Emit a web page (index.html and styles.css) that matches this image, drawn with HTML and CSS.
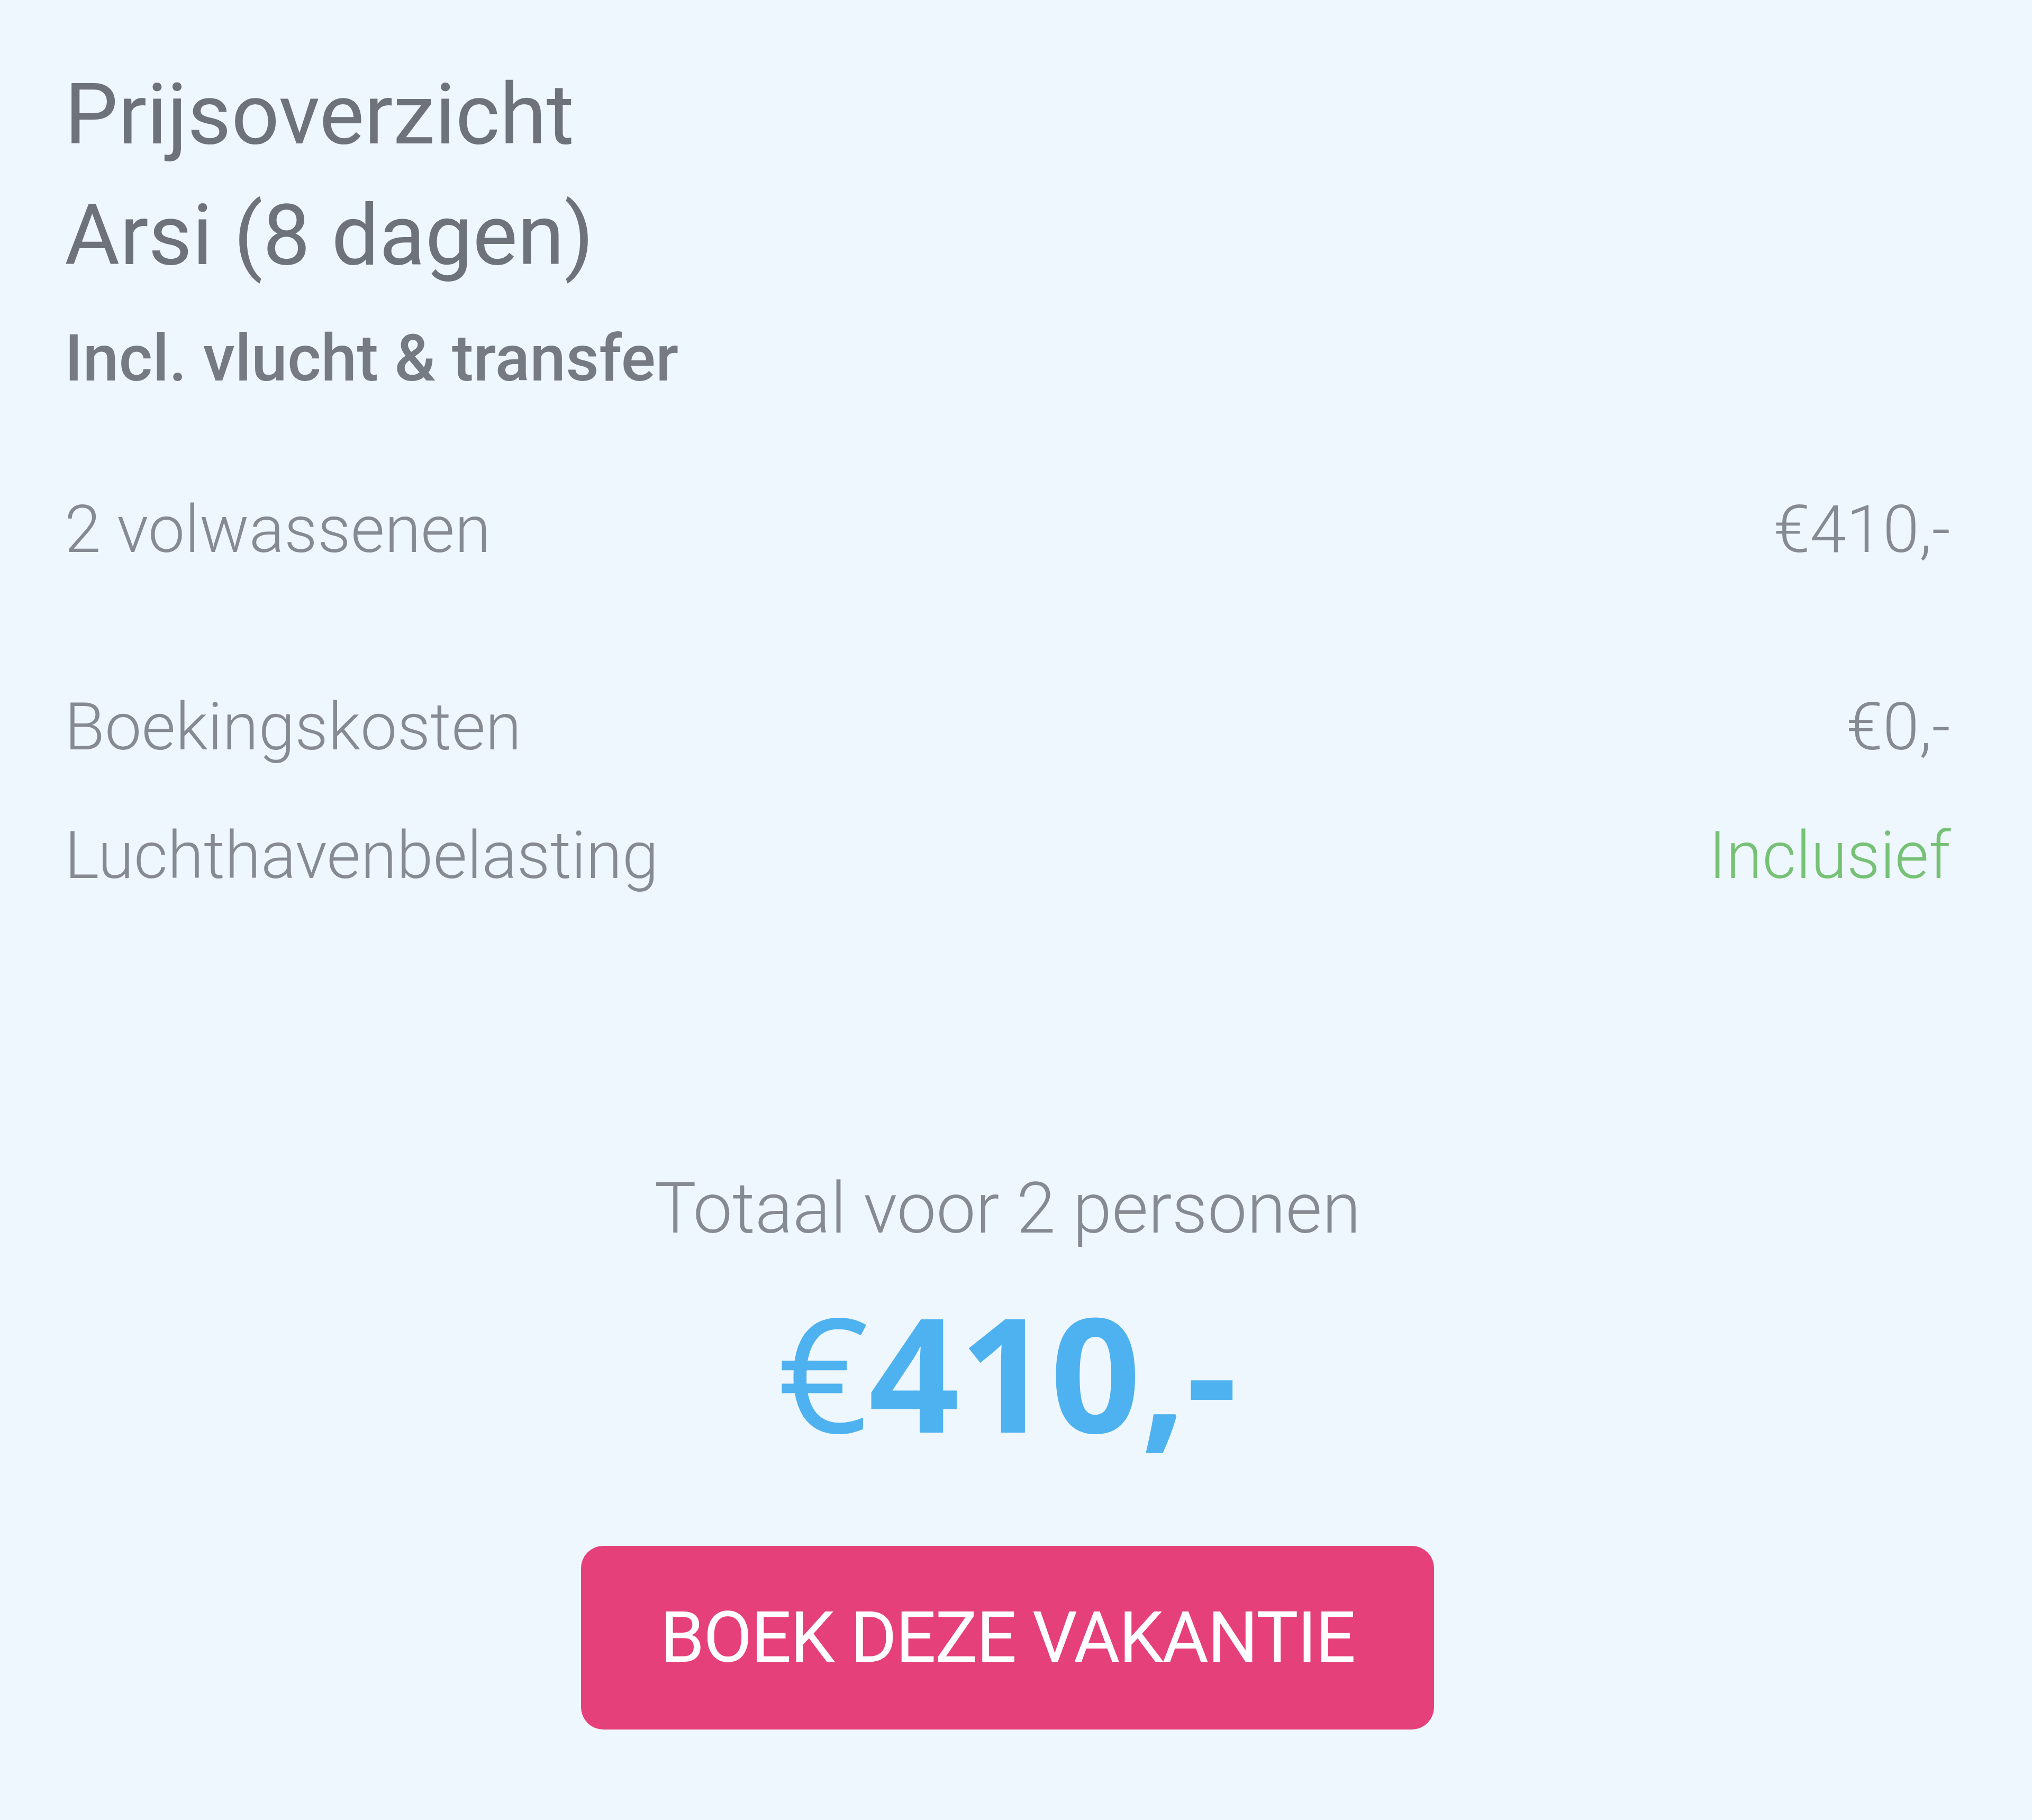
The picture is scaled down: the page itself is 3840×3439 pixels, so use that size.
FILE: index.html
```html
<!DOCTYPE html>
<html lang="nl">
<head>
    <meta charset="UTF-8">
    <meta name="viewport" content="width=device-width, initial-scale=1.0">
    <title>Prijsoverzicht - Arsi</title>
    <link rel="stylesheet" href="styles.css">
</head>
<body>
    <div class="overview">
        <h1 class="title">Prijsoverzicht<br>Arsi (8 dagen)</h1>
        <div class="subtitle">Incl. vlucht &amp; transfer</div>

        <div class="lines">
            <div class="line persons">
                <span>2 volwassenen</span>
                <span>&euro;410,-</span>
            </div>
            <div class="line">
                <span>Boekingskosten</span>
                <span>&euro;0,-</span>
            </div>
            <div class="line">
                <span>Luchthavenbelasting</span>
                <span class="included">Inclusief</span>
            </div>
        </div>

        <div class="total">
            <div class="total-label">Totaal voor 2 personen</div>
            <div class="total-price"><span class="euro">&euro;</span>410,-</div>
            <button class="book" type="button">BOEK DEZE VAKANTIE</button>
        </div>
    </div>
</body>
</html>
```

FILE: styles.css
```css
html, body {
    margin: 0;
    background-color: #eff7fe;
    font-family: 'Roboto', 'Liberation Sans', sans-serif;
}
.overview {
    padding: 103px 154px 0 122px;
    height: 3336px;
}
.title {
    margin: 0;
    font-size: 160px;
    font-weight: 400;
    line-height: 228px;
    color: #6e737b;
}
.subtitle {
    margin-top: 35px;
    font-size: 122px;
    font-weight: 500;
    line-height: 168px;
    color: #767b83;
}
.lines {
    margin-top: 155px;
    display: flex;
    flex-direction: column;
    gap: 75px;
}
.line {
    display: flex;
    justify-content: space-between;
    font-size: 124px;
    font-weight: 300;
    line-height: 168px;
    color: #868b93;
}
.line.persons {
    margin-bottom: 130px;
}
.included {
    color: #76c176;
}
.total {
    margin-top: 488px;
    display: flex;
    flex-direction: column;
    align-items: center;
}
.total-label {
    font-size: 133px;
    font-weight: 300;
    line-height: 189px;
    color: #868b93;
}
.total-price {
    margin-top: 33px;
    font-family: 'Open Sans', 'Liberation Sans', sans-serif;
    font-size: 300px;
    font-weight: 700;
    line-height: 360px;
    color: #4db2ef;
}
.total-price .euro {
    font-weight: 400;
}
.book {
    margin-top: 150px;
    width: 1612px;
    height: 347px;
    border: none;
    border-radius: 42px;
    background-color: #e6407a;
    color: #ffffff;
    font-family: 'Roboto', 'Liberation Sans', sans-serif;
    font-size: 134px;
    font-weight: 400;
    letter-spacing: -2px;
    cursor: pointer;
}
```
